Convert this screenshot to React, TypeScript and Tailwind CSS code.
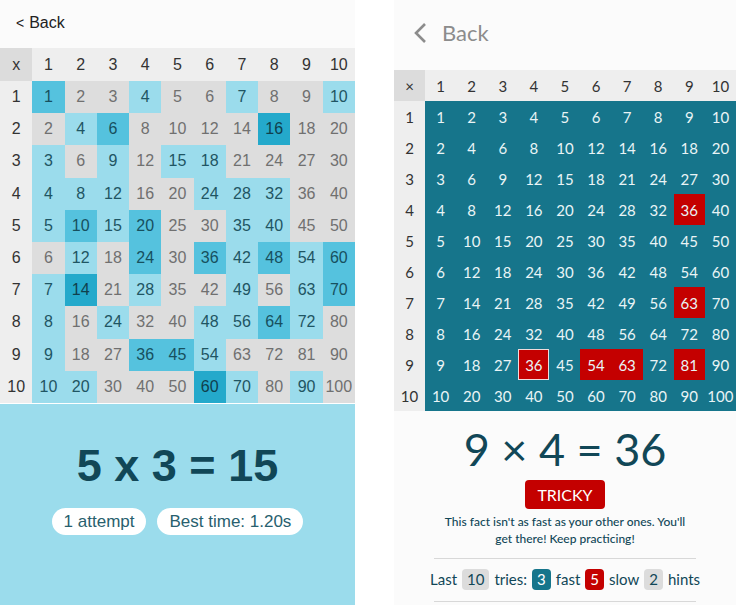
import type { ReactNode } from 'react';

const NUMBERS = [1, 2, 3, 4, 5, 6, 7, 8, 9, 10];

// One digit per fact: 0 = not practiced, 3 = best known.
const PRACTICE_LEVELS = [
  '2001001001',
  '0120000300',
  '1010110000',
  '1110011100',
  '1212001100',
  '0102021212',
  '1301001012',
  '1010011210',
  '1002210000',
  '1100031010',
];

const LEVEL_STYLES = [
  'bg-[#dddddd] text-[#707070]',
  'bg-[#9bdcec] text-[#1f5563]',
  'bg-[#55c2de] text-[#17505e]',
  'bg-[#24a9cb] text-[#10404d]',
];

const SLOW_FACTS = ['4x9', '7x9', '9x4', '9x6', '9x7', '9x9'];
const SELECTED_FACT = '9x4';

function practiceStyle(row: number, col: number) {
  return LEVEL_STYLES[Number(PRACTICE_LEVELS[row - 1][col - 1])];
}

function speedStyle(row: number, col: number) {
  const key = `${row}x${col}`;
  if (key === SELECTED_FACT) return 'bg-[#c40000] outline -outline-offset-1 outline-[#f0dcdc]';
  if (SLOW_FACTS.includes(key)) return 'bg-[#c40000]';
  return '';
}

type TimesTableProps = {
  symbol: string;
  className: string;
  headClassName: string;
  bodyClassName?: string;
  cellStyle: (row: number, col: number) => string;
};

function TimesTable({ symbol, className, headClassName, bodyClassName = '', cellStyle }: TimesTableProps) {
  return (
    <table className={`w-full table-fixed border-collapse text-center leading-5 ${className}`}>
      <thead>
        <tr className={`bg-[#eeeeee] text-[#333333] ${headClassName}`}>
          <th scope="col" className="bg-[#dcdcdc] p-0 font-normal">{symbol}</th>
          {NUMBERS.map((n) => (
            <th key={n} scope="col" className="p-0 font-normal">{n}</th>
          ))}
        </tr>
      </thead>
      <tbody className={bodyClassName}>
        {NUMBERS.map((row) => (
          <tr key={row}>
            <th scope="row" className="bg-[#eeeeee] p-0 font-normal text-[#333333]">{row}</th>
            {NUMBERS.map((col) => (
              <td key={col} className={`p-0 ${cellStyle(row, col)}`}>{row * col}</td>
            ))}
          </tr>
        ))}
      </tbody>
    </table>
  );
}

function Pill({ children }: { children: ReactNode }) {
  return <span className="rounded-full bg-white px-3 text-[17px] leading-[27px] text-[#28606e]">{children}</span>;
}

function Count({ className, children }: { className: string; children: ReactNode }) {
  return <span className={`rounded-sm px-[5px] leading-[21px] ${className}`}>{children}</span>;
}

function PracticeScreen() {
  return (
    <section className="flex flex-col font-['Liberation_Sans',Arial,sans-serif]">
      <header className="flex h-12 items-center bg-[#fbfbfb] px-4 pb-0.5">
        <button type="button" className="flex items-center gap-[5px] text-base leading-5 text-[#222222]">
          <span className="text-sm">&lt;</span>Back
        </button>
      </header>
      <TimesTable symbol="x" className="h-[355px] text-base" headClassName="h-[33px]" cellStyle={practiceStyle} />
      <div className="mt-px flex grow flex-col items-center bg-[#9bdcec] pt-9">
        <h1 className="text-[45px] leading-[52px] font-bold text-[#114757]">5 x 3 = 15</h1>
        <div className="mt-4 flex gap-[11px]">
          <Pill>1 attempt</Pill>
          <Pill>Best time: 1.20s</Pill>
        </div>
      </div>
    </section>
  );
}

function SpeedScreen() {
  return (
    <section className="flex flex-col bg-[#fbfbfb] font-[Lato,'Open_Sans',sans-serif]">
      <header className="flex h-[70px] items-center px-5 pb-1">
        <button type="button" className="flex items-center gap-4 text-[22px] leading-7 text-[#8c8c8c]">
          <svg className="h-5 w-3" viewBox="0 0 12 20" fill="none" stroke="currentColor" strokeWidth="2.6" aria-hidden="true">
            <path d="M11 1 L2 10 L11 19" />
          </svg>
          Back
        </button>
      </header>
      <TimesTable
        symbol="×"
        className="h-[341px] text-[15px]"
        headClassName="h-[31px]"
        bodyClassName="bg-[#16758b] text-[#e9f4f6]"
        cellStyle={speedStyle}
      />
      <div className="flex flex-col items-center px-10 pt-3 text-[#114757]">
        <h1 className="text-[45px] leading-[52px]">9 × 4 = 36</h1>
        <p className="mt-[5px] rounded-sm bg-[#c40000] px-3 text-base leading-[29px] text-white">TRICKY</p>
        <p className="mt-1 max-w-[246px] text-center text-xs leading-[17px] font-medium">
          This fact isn't as fast as your other ones. You'll get there! Keep practicing!
        </p>
        <div className="mt-[11px] flex w-full justify-center border-y border-[#d8d8d8] pt-[10px] pb-[11px]">
          <p className="flex items-center gap-[5px] text-[15px] leading-[21px] whitespace-nowrap">
            Last <Count className="bg-[#dcdcdc]">10</Count> tries:
            <Count className="bg-[#16758b] text-white">3</Count> fast
            <Count className="bg-[#c40000] text-white">5</Count> slow
            <Count className="bg-[#dcdcdc]">2</Count> hints
          </p>
        </div>
      </div>
    </section>
  );
}

export default function App() {
  return (
    <main className="grid min-h-screen grid-cols-[minmax(0,355fr)_minmax(0,342fr)] gap-[39px] bg-white">
      <PracticeScreen />
      <SpeedScreen />
    </main>
  );
}
